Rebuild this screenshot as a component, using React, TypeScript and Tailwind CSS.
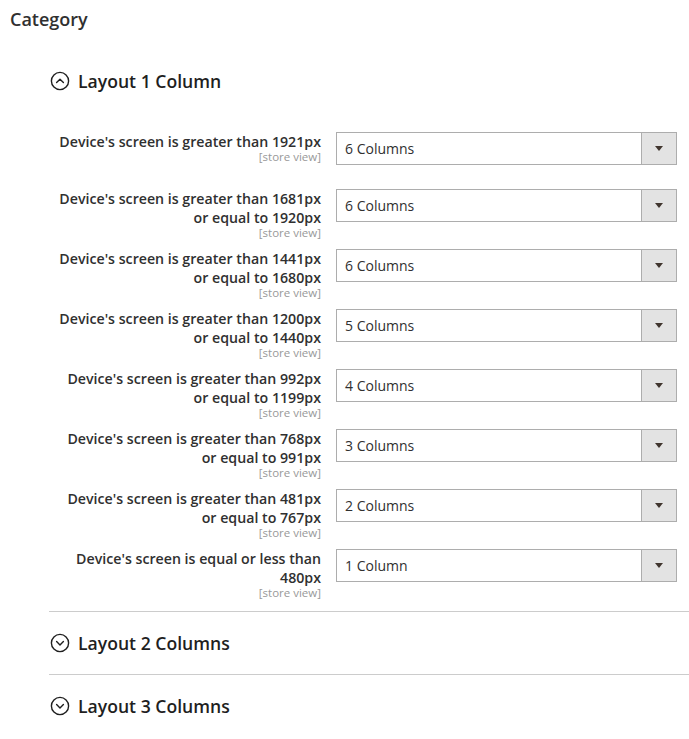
import React from "react";

const rows = [
  { label: ["Device's screen is greater than 1921px"], value: "6 Columns" },
  { label: ["Device's screen is greater than 1681px", "or equal to 1920px"], value: "6 Columns" },
  { label: ["Device's screen is greater than 1441px", "or equal to 1680px"], value: "6 Columns" },
  { label: ["Device's screen is greater than 1200px", "or equal to 1440px"], value: "5 Columns" },
  { label: ["Device's screen is greater than 992px", "or equal to 1199px"], value: "4 Columns" },
  { label: ["Device's screen is greater than 768px", "or equal to 991px"], value: "3 Columns" },
  { label: ["Device's screen is greater than 481px", "or equal to 767px"], value: "2 Columns" },
  { label: ["Device's screen is equal or less than", "480px"], value: "1 Column" },
];

function CircleChevron({ open }: { open: boolean }) {
  return (
    <svg width="20" height="20" viewBox="0 0 20 20" fill="none" stroke="#1f1f1f" strokeWidth="1.4">
      <circle cx="10" cy="10" r="8.6" />
      {open ? (
        <path d="M6.6 11.6 L10 8.2 L13.4 11.6" strokeLinecap="round" strokeLinejoin="round" />
      ) : (
        <path d="M6.6 8.6 L10 12 L13.4 8.6" strokeLinecap="round" strokeLinejoin="round" />
      )}
    </svg>
  );
}

function SectionTitle({ title, open }: { title: string; open: boolean }) {
  return (
    <div className="flex items-center gap-[8px] pl-px">
      <CircleChevron open={open} />
      <span className="text-[17.6px] font-semibold leading-[24px] text-[#1f1f1f]">{title}</span>
    </div>
  );
}

export default function App() {
  return (
    <div
      className="min-h-screen bg-white text-[#303030]"
      style={{ fontFamily: '"Open Sans", "Liberation Sans", sans-serif' }}
    >
      <div className="pl-[10px] pt-[7px]">
        <h1 className="text-[18px] font-semibold leading-[24px] text-[#303030]">Category</h1>
      </div>

      <div className="ml-[49px] mt-[38px]">
        {/* Layout 1 Column */}
        <SectionTitle title="Layout 1 Column" open={true} />

        <div className="mt-[39px] pr-[12px]">
          {rows.map((row, i) => (
            <div key={i} className={`flex items-start ${i === 0 ? "h-[57px]" : "h-[60px]"}`}>
              <div className="w-[272px] shrink-0 text-right">
                <div className="text-[14.2px] font-semibold leading-[19px] text-[#303030]">
                  {row.label.map((l) => (
                    <div key={l}>{l}</div>
                  ))}
                </div>
                <div className="text-[11.5px] leading-[12px] text-[#999999]">[store view]</div>
              </div>
              <div className="ml-[15px] flex h-[33px] w-[341px] border border-[#adadad] bg-white">
                <div className="flex flex-1 items-center pl-[8px] text-[14px] text-[#303030]">{row.value}</div>
                <div className="flex w-[35px] items-center justify-center border-l border-[#adadad] bg-[#e3e3e3]">
                  <span className="block h-0 w-0 border-x-[4px] border-t-[5px] border-x-transparent border-t-[#41362f]" />
                </div>
              </div>
            </div>
          ))}
        </div>

        <div className="mt-[2px] flex h-[63px] items-center border-t border-[#cccccc] pb-[1px]">
          <SectionTitle title="Layout 2 Columns" open={false} />
        </div>
        <div className="flex h-[63px] items-center border-t border-[#cccccc] pb-[1px]">
          <SectionTitle title="Layout 3 Columns" open={false} />
        </div>
      </div>
    </div>
  );
}
